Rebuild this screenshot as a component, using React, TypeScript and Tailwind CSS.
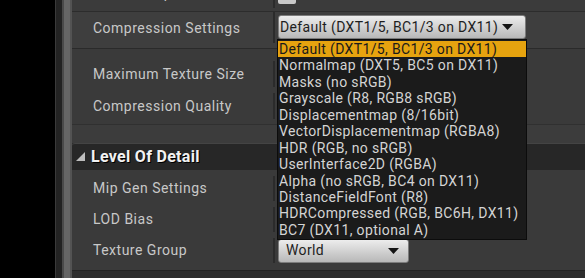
import React from 'react';

const compressionOptions = [
  'Default (DXT1/5, BC1/3 on DX11)',
  'Normalmap (DXT5, BC5 on DX11)',
  'Masks (no sRGB)',
  'Grayscale (R8, RGB8 sRGB)',
  'Displacementmap (8/16bit)',
  'VectorDisplacementmap (RGBA8)',
  'HDR (RGB, no sRGB)',
  'UserInterface2D (RGBA)',
  'Alpha (no sRGB, BC4 on DX11)',
  'DistanceFieldFont (R8)',
  'HDRCompressed (RGB, BC6H, DX11)',
  'BC7 (DX11, optional A)',
];

const Caret = () => (
  <svg width="11" height="6" viewBox="0 0 11 6" className="shrink-0">
    <path d="M0 0h11L5.5 6z" fill="#141414" />
  </svg>
);

interface RowProps {
  label: string;
  className?: string;
  children?: React.ReactNode;
}

const Row: React.FC<RowProps> = ({ label, className = '', children }) => (
  <div className={`flex shrink-0 ${className}`}>
    <div className="flex w-[201px] shrink-0 items-center pl-[21px] tracking-[0.5px] text-[#c8c8c8] whitespace-nowrap">
      {label}
    </div>
    <div className="my-[3px] w-[2px] shrink-0 bg-[#2b2b2b]" />
    <div className="flex flex-1 items-center pl-[3px]">{children}</div>
  </div>
);

const App: React.FC = () => {
  return (
    <div className="flex h-[278px] w-[585px] overflow-hidden bg-black font-[Roboto,sans-serif] text-[14px] tracking-[0.35px]">
      <div className="w-[55px] shrink-0 bg-black" />

      {/* panel frame */}
      <div className="flex shrink-0">
        <div className="w-px bg-[#3a3a3a]" />
        <div className="w-[6px] bg-[#232323]" />
        <div className="w-[2px] bg-[#4a4a4a]" />
        <div className="w-[6px] bg-[#666666]" />
        <div className="w-[2px] bg-[#535353]" />
      </div>

      <div className="flex min-w-0 flex-1 flex-col bg-[#2d2d2d]">
        {/* Defer Compression, cut off at the top */}
        <div className="-mt-[25px] flex h-[37px] shrink-0 border-b border-[#2c2c2c] bg-[#3b3b3b]">
          <div className="flex w-[201px] shrink-0 items-center pl-[21px] tracking-[0.5px] text-[#c8c8c8]">
            Defer Compression
          </div>
          <div className="my-[3px] w-[2px] shrink-0 bg-[#2b2b2b]" />
          <div className="flex flex-1 items-end pb-[7px] pl-[3px]">
            <div className="h-[18px] w-[18px] rounded-[2px] bg-[#c9c9c9]" />
          </div>
        </div>

        {/* Compression Settings with open list */}
        <div className="relative z-10 flex h-[37px] shrink-0 border-b border-[#2a2a2a] bg-[#3e3e3e]">
          <div className="flex w-[201px] shrink-0 items-center pl-[21px] pb-[3px] tracking-[0.5px] text-[#c8c8c8]">
            Compression Settings
          </div>
          <div className="mt-0 mb-[5px] w-[2px] shrink-0 bg-[#2b2b2b]" />
          <div className="flex-1 pt-[3px] pl-[3px]">
            <div className="relative w-[248px]">
              <div className="flex h-[24px] items-center rounded-[3px] border border-[#7c7c7c] bg-linear-to-b from-[#ededed] to-[#b8b8b8] pl-[1px] text-[#1e1e1e] whitespace-nowrap">
                <span>Default (DXT1/5, BC1/3 on DX11)</span>
                <span className="ml-[4px]">
                  <Caret />
                </span>
              </div>
              <div className="absolute top-full left-[-1px] w-[250px] border border-[#0c0c0c] bg-[#1b1b1b] py-px">
                {compressionOptions.map((opt, i) => (
                  <div
                    key={opt}
                    className={`h-[16.45px] pl-[1px] leading-[16.45px] whitespace-nowrap ${
                      i === 0 ? 'bg-[#e6a30f] text-[#1a1a1a]' : 'text-[#d4d4d4]'
                    }`}
                  >
                    {opt}
                  </div>
                ))}
              </div>
            </div>
          </div>
        </div>

        <div className="flex shrink-0 flex-col bg-[#3a3a3a] pt-[9px] pb-[2px]">
          <Row label="Maximum Texture Size" className="h-[32px]" />
          <Row label="Compression Quality" className="h-[32px]" />
        </div>

        <div className="h-[19px] shrink-0 border-t border-[#303030] bg-[#3c3c3c]" />

        {/* Level Of Detail category */}
        <div className="flex h-[27px] shrink-0 items-center rounded-tl-[3px] border-t border-[#444444] bg-[#272727] pl-[4px]">
          <svg width="9" height="9" viewBox="0 0 9 9" className="mt-[-2px]">
            <path d="M9 0v9H0z" fill="#bdbdbd" />
          </svg>
          <span className="ml-[6px] text-[16px] font-bold tracking-[0.3px] text-[#f2f2f2] [text-shadow:1px_1px_0_#000]">
            Level Of Detail
          </span>
        </div>

        <div className="flex shrink-0 flex-col bg-[#3a3a3a] pt-[3px] pb-[4px]">
          <Row label="Mip Gen Settings" className="h-[31px]" />
          <Row label="LOD Bias" className="h-[31px]" />
          <Row label="Texture Group" className="h-[31px]">
            <div className="flex h-[24px] w-[131px] items-center justify-between rounded-[3px] border border-[#7c7c7c] bg-linear-to-b from-[#ededed] to-[#b8b8b8] pr-[9px] pl-[7px] text-[#1e1e1e]">
              <span>World</span>
              <Caret />
            </div>
          </Row>
        </div>

        <div className="flex-1 border-t border-[#242424] bg-[#2e2e2e]" />
      </div>
    </div>
  );
};

export default App;
